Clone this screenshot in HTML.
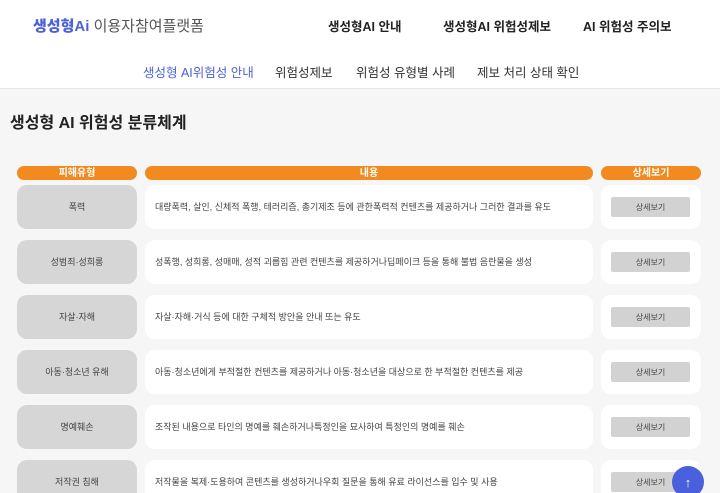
<!DOCTYPE html>
<html><head><meta charset="utf-8"><style>
*{margin:0;padding:0;box-sizing:border-box}
html,body{width:720px;height:493px;overflow:hidden}
body{background:#f6f6f6;font-family:"Liberation Sans","Noto Sans CJK KR",sans-serif;position:relative;color:#222}
.hdr{position:absolute;left:0;top:0;width:720px;height:89px;background:#fff;border-bottom:1px solid #e6e6e6}
.abs{position:absolute;white-space:nowrap;line-height:1}
.logo{left:33px;top:19px;font-size:15px}
.logo b{color:#4d62d8;font-weight:900}
.logo span{color:#555}
.tn{top:21px;font-size:12.5px;font-weight:700;color:#222}
.sn{top:67px;font-size:12.5px;color:#333}
.ul{left:133px;top:86px;width:126px;height:3px;background:#4d62d8}
.title{left:10px;top:116px;font-size:16px;font-weight:700;color:#222}
.pill{position:absolute;top:166px;height:14px;background:#f28a1f;border-radius:7px;color:#fff;font-size:10px;font-weight:700;display:flex;align-items:center;justify-content:center;line-height:1;padding-top:2px}
.c1{position:absolute;left:17px;width:120px;height:44px;background:#d6d6d6;border-radius:10px;font-size:9px;color:#444;display:flex;align-items:center;justify-content:center;line-height:1}
.c2{position:absolute;left:145px;width:448px;height:44px;background:#fff;border-radius:10px;font-size:9px;color:#444;display:flex;align-items:center;padding-left:10px;line-height:1;white-space:nowrap}
.c3{position:absolute;left:601px;width:100px;height:44px;background:#fff;border-radius:10px}
.c3 div{position:absolute;left:10px;top:12px;width:79px;height:20px;background:#d2d2d2;border-radius:2px;font-size:8px;color:#444;display:flex;align-items:center;justify-content:center;line-height:1;padding-top:2px}
.top{position:absolute;left:672px;top:466px;width:32px;height:32px;border-radius:50%;background:#4a5fdc;color:#fff;display:flex;align-items:center;justify-content:center;font-size:13px;line-height:1}
</style></head><body>
<div class="hdr"></div>
<div class="abs logo"><b>생성형Ai</b> <span>이용자참여플랫폼</span></div>
<div class="abs tn" style="left:328px">생성형AI 안내</div>
<div class="abs tn" style="left:443px">생성형AI 위험성제보</div>
<div class="abs tn" style="left:583px">AI 위험성 주의보</div>
<div class="abs sn" style="left:143px;color:#4d62d8">생성형 AI위험성 안내</div>
<div class="abs sn" style="left:275px">위험성제보</div>
<div class="abs sn" style="left:356px">위험성 유형별 사례</div>
<div class="abs sn" style="left:477px">제보 처리 상태 확인</div>
<div class="ul"></div>
<div class="abs title">생성형 AI 위험성 분류체계</div>
<div class="pill" style="left:17px;width:120px">피해유형</div>
<div class="pill" style="left:145px;width:448px">내용</div>
<div class="pill" style="left:601px;width:100px">상세보기</div>

<div class="c1" style="top:185px">폭력</div><div class="c2" style="top:185px">대량폭력, 살인, 신체적 폭행, 테러리즘, 총기제조 등에 관한폭력적 컨텐츠를 제공하거나 그러한 결과를 유도</div><div class="c3" style="top:185px"><div>상세보기</div></div>
<div class="c1" style="top:240px">성범죄·성희롱</div><div class="c2" style="top:240px">성폭행, 성희롱, 성매매, 성적 괴롭힘 관련 컨텐츠를 제공하거나딥페이크 등을 통해 불법 음란물을 생성</div><div class="c3" style="top:240px"><div>상세보기</div></div>
<div class="c1" style="top:295px">자살·자해</div><div class="c2" style="top:295px">자살·자해·거식 등에 대한 구체적 방안을 안내 또는 유도</div><div class="c3" style="top:295px"><div>상세보기</div></div>
<div class="c1" style="top:350px">아동·청소년 유해</div><div class="c2" style="top:350px">아동·청소년에게 부적절한 컨텐츠를 제공하거나 아동·청소년을 대상으로 한 부적절한 컨텐츠를 제공</div><div class="c3" style="top:350px"><div>상세보기</div></div>
<div class="c1" style="top:405px">명예훼손</div><div class="c2" style="top:405px">조작된 내용으로 타인의 명예를 훼손하거나특정인을 묘사하여 특정인의 명예를 훼손</div><div class="c3" style="top:405px"><div>상세보기</div></div>
<div class="c1" style="top:460px">저작권 침해</div><div class="c2" style="top:460px">저작물을 복제·도용하여 콘텐츠를 생성하거나우회 질문을 통해 유료 라이선스를 입수 및 사용</div><div class="c3" style="top:460px"><div>상세보기</div></div>
<div class="top">↑</div>
</body></html>
